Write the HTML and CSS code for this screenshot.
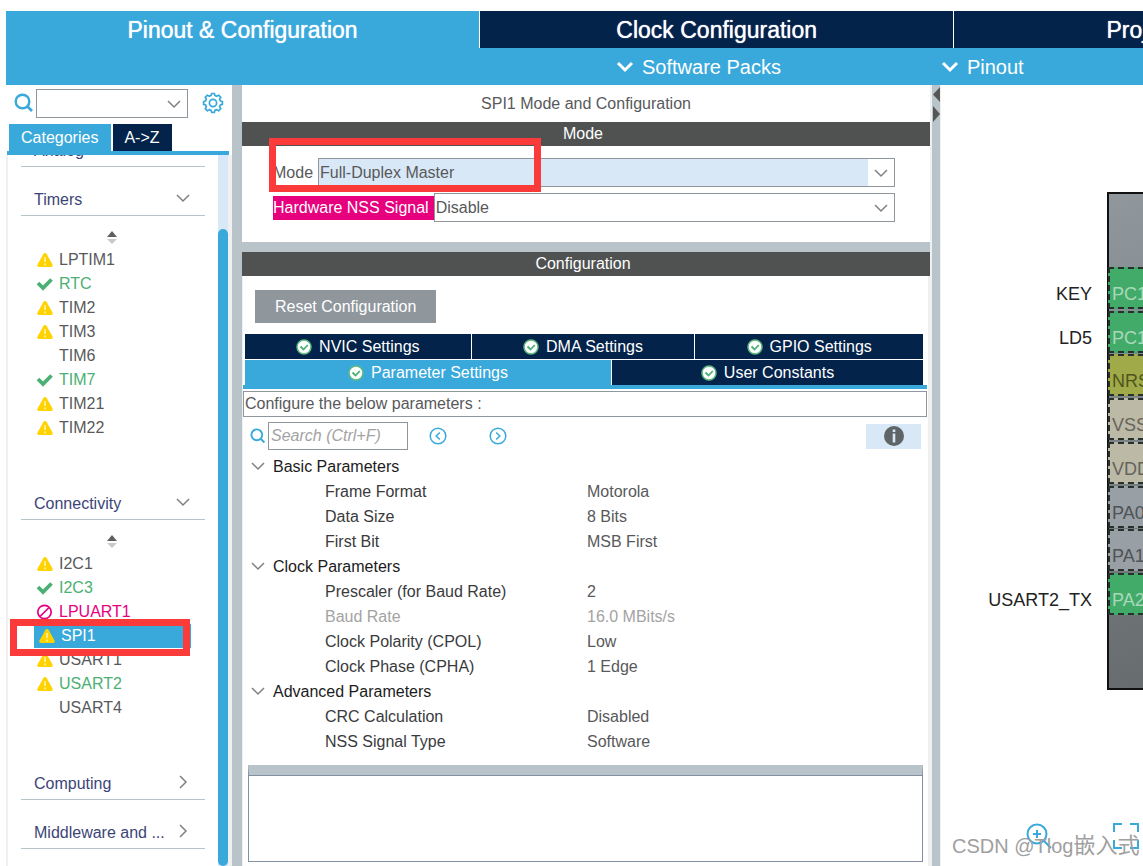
FILE: index.html
```html
<!DOCTYPE html>
<html lang="en">
<head>
<meta charset="utf-8">
<title>Pinout &amp; Configuration</title>
<link rel="stylesheet" href="styles.css">
</head>
<body>
<svg class="defs" aria-hidden="true">
  <symbol id="warn" viewBox="0 0 18 16"><path d="M9 1 Q10 1 10.800 2.200 L16.500 12.500 Q17.200 15 15 15 H3 Q.8 15 1.500 12.500 L7.200 2.200 Q8 1 9 1Z" fill="#ffd200"/><path d="M9 5v5M9 11.500v2" stroke="#fff3b0" stroke-width="1.600"/></symbol>
  <symbol id="tick" viewBox="0 0 18 16"><path d="M2 7 L7 12 L15.500 3.500" fill="none" stroke="#4bb073" stroke-width="3.800"/></symbol>
  <symbol id="ban" viewBox="0 0 18 16"><circle cx="8.500" cy="8" r="6.700" fill="none" stroke="#e6007e" stroke-width="1.700"/><path d="M4 12.500 L13 3.500" stroke="#e6007e" stroke-width="1.700"/></symbol>
  <symbol id="ok" viewBox="0 0 16 16"><circle cx="8" cy="8" r="7" fill="#fff" stroke="#5db97f" stroke-width="1.500"/><path d="M4.500 7.500 L7.500 10.500 L11.800 6" fill="none" stroke="#4bb073" stroke-width="1.800"/></symbol>
  <symbol id="down" viewBox="0 0 14 14"><path d="M1 4 L7 10 L13 4" fill="none" stroke="currentColor" stroke-width="1.500"/></symbol>
  <symbol id="right" viewBox="0 0 14 14"><path d="M4 1 L10 7 L4 13" fill="none" stroke="currentColor" stroke-width="1.500"/></symbol>
  <symbol id="bold-down" viewBox="0 0 18 18"><path d="M2 5 L9 12 L16 5" fill="none" stroke="#fff" stroke-width="3"/></symbol>
  <symbol id="find" viewBox="0 0 20 20"><circle cx="8.500" cy="8.500" r="6.800" fill="none" stroke="#39a9dc" stroke-width="2.400"/><path d="M13 13 L18 18" stroke="#39a9dc" stroke-width="2.600"/></symbol>
  <symbol id="sort" viewBox="0 0 12 14"><path d="M6 0 L11 6 H1Z" fill="#5f5f5f"/><path d="M1 8 H11 L6 13Z" fill="#c9c9c9"/></symbol>
</svg>

<div class="app">
  <nav class="tabs">
    <button class="tab tab-on">Pinout &amp; Configuration</button>
    <button class="tab">Clock Configuration</button>
    <button class="tab">Project Manager</button>
  </nav>
  <div class="menus">
    <button class="menu"><svg><use href="#bold-down"/></svg>Software Packs</button>
    <button class="menu"><svg><use href="#bold-down"/></svg>Pinout</button>
  </div>

  <main class="work">
    <aside class="side">
      <div class="side-search">
        <svg class="find"><use href="#find"/></svg>
        <div class="pick"><select aria-label="Search peripherals"><option></option></select><svg><use href="#down"/></svg></div>
        <button class="gear" aria-label="Settings"><svg viewBox="0 0 22 22"><g fill="none" stroke="#39a9dc"><path stroke-width="1.700" stroke-linejoin="round" d="M9.600 1.500h2.800l.5 2 1.800.8 1.900-1.200 2.200 2.200-1.200 1.900.8 1.800 2 .6v2.800l-2 .5-.8 1.800 1.200 1.900-2.200 2.200-1.900-1.200-1.800.8-.5 2H9.600l-.5-2-1.800-.8-1.900 1.200-2.200-2.200 1.200-1.900-.8-1.800-2-.5V9.600l2-.6.8-1.800-1.200-1.900 2.200-2.200 1.900 1.200 1.800-.8z"/><circle cx="11" cy="11" r="3.600" stroke-width="1.700"/></g></svg></button>
      </div>
      <div class="side-tabs"><button class="side-tab side-tab-on">Categories</button><button class="side-tab">A-&gt;Z</button></div>
      <div class="side-body">
        <div class="cats">
          <button class="cat">Analog</button>
          <button class="cat">Timers<svg><use href="#down"/></svg></button>
          <div class="sort"><svg><use href="#sort"/></svg></div>
          <ul class="items">
            <li><svg><use href="#warn"/></svg>LPTIM1</li>
            <li class="good"><svg><use href="#tick"/></svg>RTC</li>
            <li><svg><use href="#warn"/></svg>TIM2</li>
            <li><svg><use href="#warn"/></svg>TIM3</li>
            <li><svg></svg>TIM6</li>
            <li class="good"><svg><use href="#tick"/></svg>TIM7</li>
            <li><svg><use href="#warn"/></svg>TIM21</li>
            <li><svg><use href="#warn"/></svg>TIM22</li>
          </ul>
          <button class="cat">Connectivity<svg><use href="#down"/></svg></button>
          <div class="sort"><svg><use href="#sort"/></svg></div>
          <ul class="items">
            <li><svg><use href="#warn"/></svg>I2C1</li>
            <li class="good"><svg><use href="#tick"/></svg>I2C3</li>
            <li class="bad"><svg><use href="#ban"/></svg>LPUART1</li>
            <li class="chosen"><svg><use href="#warn"/></svg>SPI1<span class="mark mark-item"></span></li>
            <li><svg><use href="#warn"/></svg>USART1</li>
            <li class="good"><svg><use href="#warn"/></svg>USART2</li>
            <li><svg></svg>USART4</li>
          </ul>
          <button class="cat">Computing<svg><use href="#right"/></svg></button>
          <button class="cat">Middleware and ...<svg><use href="#right"/></svg></button>
        </div>
        <div class="track"><div class="thumb"></div></div>
      </div>
    </aside>

    <div class="split"></div>

    <section class="center">
      <h1 class="title">SPI1 Mode and Configuration</h1>
      <h2 class="bar">Mode</h2>
      <div class="modes">
        <div class="field"><label for="mode">Mode</label><div class="pick pick-on"><select id="mode"><option>Full-Duplex Master</option></select><svg><use href="#down"/></svg></div><span class="mark mark-mode"></span></div>
        <div class="field"><label class="hot" for="nss">Hardware NSS Signal</label><div class="pick"><select id="nss"><option>Disable</option></select><svg><use href="#down"/></svg></div></div>
      </div>
      <h2 class="bar bar-config">Configuration</h2>
      <div class="config">
        <button class="reset">Reset Configuration</button>
        <div class="sets">
          <div class="set-row set-row-top">
            <button class="set"><svg><use href="#ok"/></svg>NVIC Settings</button>
            <button class="set"><svg><use href="#ok"/></svg>DMA Settings</button>
            <button class="set"><svg><use href="#ok"/></svg>GPIO Settings</button>
          </div>
          <div class="set-row set-row-low">
            <button class="set set-on"><svg><use href="#ok"/></svg>Parameter Settings</button>
            <button class="set"><svg><use href="#ok"/></svg>User Constants</button>
          </div>
        </div>
        <div class="hint">Configure the below parameters :</div>
        <div class="tools">
          <svg class="find"><use href="#find"/></svg>
          <input class="search" type="text" placeholder="Search (Ctrl+F)" aria-label="Search parameters">
          <button class="step" aria-label="Previous"><svg viewBox="0 0 18 18"><circle cx="9" cy="9" r="7.800"/><path d="M10.800 5.500 L7.200 9 L10.800 12.500"/></svg></button>
          <button class="step" aria-label="Next"><svg viewBox="0 0 18 18"><circle cx="9" cy="9" r="7.800"/><path d="M7.200 5.500 L10.800 9 L7.200 12.500"/></svg></button>
          <button class="info" aria-label="Information"><svg viewBox="0 0 20 20"><circle cx="10" cy="10" r="10" fill="#5f6467"/><path d="M10 7.500v9M10 3.500v2.600" stroke="#d9e8f6" stroke-width="2.600"/></svg></button>
        </div>
        <table class="params">
          <tr><th colspan="2"><svg><use href="#down"/></svg>Basic Parameters</th></tr>
          <tr><td>Frame Format</td><td>Motorola</td></tr>
          <tr><td>Data Size</td><td>8 Bits</td></tr>
          <tr><td>First Bit</td><td>MSB First</td></tr>
          <tr><th colspan="2"><svg><use href="#down"/></svg>Clock Parameters</th></tr>
          <tr><td>Prescaler (for Baud Rate)</td><td>2</td></tr>
          <tr class="dim"><td>Baud Rate</td><td>16.0 MBits/s</td></tr>
          <tr><td>Clock Polarity (CPOL)</td><td>Low</td></tr>
          <tr><td>Clock Phase (CPHA)</td><td>1 Edge</td></tr>
          <tr><th colspan="2"><svg><use href="#down"/></svg>Advanced Parameters</th></tr>
          <tr><td>CRC Calculation</td><td>Disabled</td></tr>
          <tr><td>NSS Signal Type</td><td>Software</td></tr>
        </table>
        <textarea class="notes" aria-label="Parameter description" readonly></textarea>
      </div>
    </section>

    <div class="split split-right"><svg viewBox="0 0 9 40"><path d="M8 2 V17 L1 9.500Z M1 21 V37 L8 29Z" fill="#555"/></svg></div>

    <section class="canvas">
      <div class="chip">
        <div class="pins">
          <div class="pin pin-set"><span class="net">KEY</span>PC14</div>
          <div class="pin pin-set"><span class="net">LD5</span>PC15</div>
          <div class="pin pin-reset">NRST</div>
          <div class="pin pin-power">VSSA</div>
          <div class="pin pin-power">VDDA</div>
          <div class="pin">PA0</div>
          <div class="pin">PA1</div>
          <div class="pin pin-set"><span class="net">USART2_TX</span>PA2</div>
        </div>
      </div>
      <div class="views">
        <button aria-label="Zoom in"><svg viewBox="0 0 26 26"><circle cx="11" cy="11" r="9.500"/><path d="M11 7v8M7 11h8M18 18l7 7"/></svg></button>
        <button aria-label="Fit"><svg viewBox="0 0 26 26"><path d="M1 9V1h8M17 1h8v8M25 17v8h-8M9 25H1v-8"/></svg></button>
      </div>
      <div class="credit">CSDN @Tlog<span class="credit-cjk" lang="zh">嵌入式</span></div>
    </section>
  </main>
</div>
</body>
</html>
```
FILE: styles.css
```css
* { box-sizing: border-box; }

body {
  margin: 0;
  background: #fff;
  color: #58595b;
  font: 16px/20px "Liberation Sans", Arial, "Noto Sans CJK SC", sans-serif;
}

button, input, select, textarea {
  margin: 0;
  padding: 0;
  border: 0;
  border-radius: 0;
  background: none;
  color: inherit;
  font: inherit;
}

svg { display: block; flex: none; }
.defs { position: absolute; width: 0; height: 0; }

.app {
  display: flex;
  flex-direction: column;
  height: 100vh;
  min-height: 860px;
  padding: 11px 0 0 6px;
  overflow: hidden;
}

/* Header */
.tabs {
  display: flex;
  flex: none;
  overflow: hidden;
  background: #39a9dc;
}
.tab {
  flex: 0 0 41.7%;
  height: 37px;
  border-right: 1px solid #fff;
  background: #03234b;
  color: #fff;
  font-size: 23px;
  line-height: 36px;
  text-shadow: 0 0 1px #fff;
}
.tab-on { background: #39a9dc; }
.menus {
  display: flex;
  flex: none;
  gap: 160px;
  height: 37px;
  padding-left: 610px;
  background: #39a9dc;
}
.menu {
  display: flex;
  align-items: center;
  gap: 8px;
  color: #fff;
  font-size: 20px;
}
.menu svg { width: 18px; height: 18px; }

.work {
  display: grid;
  flex: 1;
  grid-template-columns: 226px 10px minmax(0, 1fr) 11px 202px;
  min-height: 0;
}

/* Drop-downs */
.pick {
  position: relative;
  flex: 1;
  height: 29px;
  border: 1px solid #8f979d;
}
.pick select {
  display: block;
  width: 100%;
  height: 100%;
  padding-left: 1px;
  appearance: none;
  outline: 0;
}
.pick svg {
  position: absolute;
  top: 7px;
  right: 6px;
  width: 14px;
  height: 14px;
  color: #808080;
  pointer-events: none;
}
.pick-on select { background: linear-gradient(90deg, #d9e8f6 calc(100% - 26px), #fff 0); }

/* Sidebar */
.side { display: flex; flex-direction: column; min-height: 0; }
.side-search {
  display: flex;
  align-items: center;
  height: 36px;
  padding: 0 8px;
}
.side-search .find { width: 20px; height: 20px; margin-right: 2px; }
.gear { margin-left: 14px; }
.gear svg { width: 22px; height: 22px; }
.side-tabs {
  display: flex;
  gap: 2px;
  margin: 3px 3px 0 1px;
  padding-left: 2px;
  border-bottom: 4px solid #39a9dc;
}
.side-tab {
  height: 27px;
  padding: 0 12px 0 11px;
  background: #03234b;
  color: #fff;
}
.side-tab-on { padding: 0 13px 0 12px; background: #39a9dc; }
.side-body {
  display: flex;
  flex: 1;
  min-height: 0;
  border: solid #f0f0f0;
  border-width: 0 4px 0 2px;
}
.cats {
  flex: 1;
  padding: 0 13px;
  overflow: hidden;
}
.cat {
  display: flex;
  justify-content: space-between;
  align-items: flex-end;
  width: 100%;
  height: 49px;
  padding: 0 15px 5px 13px;
  border-bottom: 1px solid #b8c4ca;
  color: #3c4577;
}
.cat svg { width: 14px; height: 14px; margin-bottom: 5px; color: #808080; }
.cat:first-child { margin-top: -37px; }
.sort { padding: 15px 0 3px 85px; }
.sort svg { width: 12px; height: 14px; }
.items {
  margin: 0 0 31px;
  padding: 0 14px 0 13px;
  list-style: none;
}
.items li {
  position: relative;
  display: flex;
  align-items: center;
  gap: 5px;
  height: 24px;
  padding-left: 2px;
}
.items svg { width: 18px; height: 16px; }
.items .good { color: #4bb073; }
.items .bad { color: #e6007e; }
.items .chosen { padding-left: 4px; background: #39a9dc; color: #fff; }
.track { width: 10px; background: #d9e8f6; }
.thumb {
  height: calc(100% - 74px);
  margin-top: 74px;
  border-radius: 5px;
  background: #39a9dc;
}

/* Highlight frames */
.mark {
  position: absolute;
  border: 7px solid #fb3a3a;
  pointer-events: none;
}
.mark-item { top: -5px; left: -24px; width: 180px; height: 37px; z-index: 1; }
.mark-mode { top: -20px; left: -4px; width: 272px; height: 54px; }

/* Dividers */
.split { background: #b8c4ca; }
.split-right { border: solid #eef1f2; border-width: 0 1px 0 2px; }
.split-right svg { width: 9px; height: 40px; }

/* Centre panel */
.center { display: flex; flex-direction: column; min-height: 0; }
.title, .bar { margin: 0; font: inherit; text-align: center; }
.title { padding: 9px 0 8px; }
.bar {
  padding: 2px 6px 2px 0;
  background: #4f5251;
  color: #fff;
}
.bar-config { border-top: 10px solid #b8c4ca; }
.modes {
  display: grid;
  gap: 6px;
  padding: 12px 35px 20px 31px;
}
.field { position: relative; display: flex; align-items: center; }
.field label { padding: 2px 5px 2px 0; }
.field .hot { background: #e6007e; color: #fff; }

.config {
  display: flex;
  flex: 1;
  flex-direction: column;
  min-height: 0;
  padding: 14px 1px 4px 0;
  border: solid #f0f0f0;
  border-width: 0 2px 0 1px;
}
.reset {
  align-self: flex-start;
  height: 33px;
  margin-left: 12px;
  padding: 0 20px;
  background: #8f979d;
  color: #fff;
}
.sets {
  margin: 11px 0 2px;
  padding: 0 4px 0 2px;
  border-bottom: 4px solid #39a9dc;
}
.set-row { display: grid; gap: 1px; }
.set-row-top { grid-template-columns: 226fr 223fr 228fr; margin-bottom: 1px; }
.set-row-low { grid-template-columns: 366fr 311fr; }
.set {
  display: flex;
  align-items: center;
  justify-content: center;
  gap: 7px;
  height: 25px;
  padding-top: 1px;
  background: #03234b;
  color: #fff;
}
.set-on { background: #39a9dc; }
.set svg { width: 16px; height: 16px; }
.hint {
  padding: 2px 1px;
  border: 1px solid #8f979d;
}
.tools {
  display: flex;
  align-items: center;
  height: 37px;
  padding: 1px 6px 0 7px;
}
.tools .find { width: 16px; height: 16px; margin-right: 2px; }
.search {
  width: 140px;
  height: 28px;
  margin-right: 21px;
  padding: 0 2px;
  border: 1px solid #8f979d;
}
.search::placeholder { color: #a3a3a3; font-style: italic; opacity: 1; }
.step { margin-right: 42px; }
.step svg { width: 18px; height: 18px; fill: none; stroke: #39a9dc; stroke-width: 1.5; }
.info {
  display: flex;
  align-items: center;
  justify-content: center;
  width: 55px;
  height: 25px;
  margin-left: auto;
  background: #d9e8f6;
}
.info svg { width: 20px; height: 20px; }

.params {
  width: 100%;
  margin-bottom: 11px;
  border-collapse: collapse;
  table-layout: fixed;
}
.params tr { height: 25px; }
.params th, .params td { padding: 0; font-weight: normal; text-align: left; }
.params th { color: #1c1c1c; }
.params th svg {
  display: inline-block;
  width: 14px;
  height: 14px;
  margin: 0 8px 0 8px;
  color: #808080;
  vertical-align: -1px;
}
.params td { width: 50%; padding-left: 2px; color: #58595b; }
.params td:first-child { padding-left: 82px; color: #3a3a3c; }
.params .dim td { color: #a3a3a3; }
.notes {
  flex: 1;
  min-height: 40px;
  margin: 0 4px 0 5px;
  border: 1px solid #8090a0;
  border-top: 10px solid #b8c4ca;
  box-shadow: inset 0 1px #8090a0;
  resize: none;
}

/* Chip view */
.canvas { position: relative; overflow: hidden; }
.chip {
  position: absolute;
  top: 107px;
  left: 166px;
  width: 498px;
  height: 498px;
  padding-top: 73px;
  border: 2px solid #111;
  background: linear-gradient(160deg, #90989e, #6c7174 65%, #5c5f61);
}
.pins {
  display: flex;
  flex-direction: column;
  justify-content: space-between;
  height: 348px;
  margin-left: -1px;
}
.pin {
  position: relative;
  height: 42px;
  padding: 14px 0 0 2px;
  border: 2px dashed #26302c;
  border-width: 2px 0 2px 2px;
  background: #989fa5;
  color: #4e5357;
  font-size: 18px;
  line-height: 22px;
}
.pin-set { background: #42ab69; color: #a9d8b9; }
.pin-reset { background: #a0aa48; color: #50551f; }
.pin-power { background: #bcb9a6; color: #64645c; }
.net {
  position: absolute;
  right: calc(100% + 18px);
  color: #222;
}
.views {
  position: absolute;
  top: 738px;
  left: 85px;
  display: flex;
  gap: 61px;
}
.views svg { width: 26px; height: 26px; fill: none; stroke: #39a9dc; stroke-width: 2; }
.credit {
  position: absolute;
  top: 748px;
  left: 11px;
  color: #a0a0a0;
  font-size: 20px;
  line-height: 26px;
  white-space: nowrap;
}
.credit-cjk { font-size: 22px; }
```
